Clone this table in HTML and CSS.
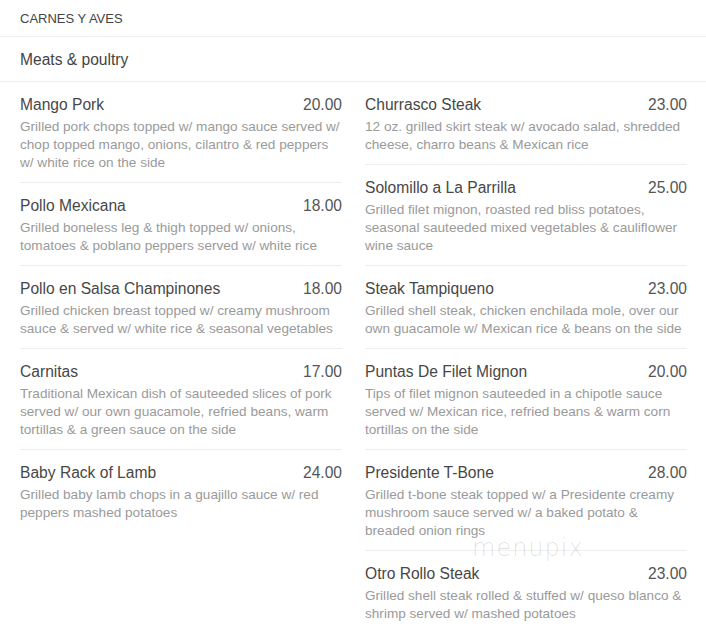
FILE: index.html
```html
<!DOCTYPE html>
<html>
<head>
<meta charset="utf-8">
<link rel="stylesheet" href="styles.css">
</head>
<body>
<div class="page">
  <div class="section-title">CARNES Y AVES</div>
  <div class="section-sub">Meats &amp; poultry</div>
  <div class="columns">
    <div class="col">
      <div class="item">
        <div class="head"><span class="name">Mango Pork</span><span class="price">20.00</span></div>
        <div class="desc">Grilled pork chops topped w/ mango sauce served w/ chop topped mango, onions, cilantro &amp; red peppers w/ white rice on the side</div>
      </div>
      <div class="item">
        <div class="head"><span class="name">Pollo Mexicana</span><span class="price">18.00</span></div>
        <div class="desc">Grilled boneless leg &amp; thigh topped w/ onions, tomatoes &amp; poblano peppers served w/ white rice</div>
      </div>
      <div class="item">
        <div class="head"><span class="name">Pollo en Salsa Champinones</span><span class="price">18.00</span></div>
        <div class="desc">Grilled chicken breast topped w/ creamy mushroom sauce &amp; served w/ white rice &amp; seasonal vegetables</div>
      </div>
      <div class="item">
        <div class="head"><span class="name">Carnitas</span><span class="price">17.00</span></div>
        <div class="desc">Traditional Mexican dish of sauteeded slices of pork served w/ our own guacamole, refried beans, warm tortillas &amp; a green sauce on the side</div>
      </div>
      <div class="item">
        <div class="head"><span class="name">Baby Rack of Lamb</span><span class="price">24.00</span></div>
        <div class="desc">Grilled baby lamb chops in a guajillo sauce w/ red peppers mashed potatoes</div>
      </div>
    </div>
    <div class="col">
      <div class="item">
        <div class="head"><span class="name">Churrasco Steak</span><span class="price">23.00</span></div>
        <div class="desc">12 oz. grilled skirt steak w/ avocado salad, shredded cheese, charro beans &amp; Mexican rice</div>
      </div>
      <div class="item">
        <div class="head"><span class="name">Solomillo a La Parrilla</span><span class="price">25.00</span></div>
        <div class="desc">Grilled filet mignon, roasted red bliss potatoes, seasonal sauteeded mixed vegetables &amp; cauliflower wine sauce</div>
      </div>
      <div class="item">
        <div class="head"><span class="name">Steak Tampiqueno</span><span class="price">23.00</span></div>
        <div class="desc">Grilled shell steak, chicken enchilada mole, over our own guacamole w/ Mexican rice &amp; beans on the side</div>
      </div>
      <div class="item">
        <div class="head"><span class="name">Puntas De Filet Mignon</span><span class="price">20.00</span></div>
        <div class="desc">Tips of filet mignon sauteeded in a chipotle sauce served w/ Mexican rice, refried beans &amp; warm corn tortillas on the side</div>
      </div>
      <div class="item">
        <div class="head"><span class="name">Presidente T-Bone</span><span class="price">28.00</span></div>
        <div class="desc">Grilled t-bone steak topped w/ a Presidente creamy mushroom sauce served w/ a baked potato &amp; breaded onion rings</div>
      </div>
      <div class="item">
        <div class="head"><span class="name">Otro Rollo Steak</span><span class="price">23.00</span></div>
        <div class="desc">Grilled shell steak rolled &amp; stuffed w/ queso blanco &amp; shrimp served w/ mashed potatoes</div>
      </div>
    </div>
  </div>
  <div class="watermark">menupix</div>
</div>
</body>
</html>
```

FILE: styles.css
```css
html, body {
  margin: 0;
  padding: 0;
  background: #fff;
}
body {
  font-family: "Liberation Sans", Arial, sans-serif;
  color: #444;
}
.page {
  position: relative;
  width: 706px;
}
.section-title {
  font-size: 13px;
  line-height: 18px;
  padding: 10px 20px 8px;
  color: #444;
  border-bottom: 1px solid #eee;
}
.section-sub {
  font-size: 15.6px;
  line-height: 20px;
  padding: 13px 20px 11px;
  color: #444;
  border-bottom: 1px solid #eee;
}
.columns {
  display: grid;
  grid-template-columns: 322px 322px;
  column-gap: 23px;
  padding: 0 19px 0 20px;
}
.item {
  padding: 13px 0 10px;
  border-bottom: 1px solid #eee;
}
.item:last-child {
  border-bottom: none;
}
.head {
  display: flex;
  justify-content: space-between;
  font-size: 15.6px;
  line-height: 20px;
  color: #474747;
}
.price {
  color: #555;
}
.desc {
  margin-top: 3px;
  font-size: 13.6px;
  line-height: 18px;
  color: #9a9a9a;
}
.watermark {
  position: absolute;
  left: 472px;
  top: 540px;
  font-family: "DejaVu Sans", sans-serif;
  font-weight: 200;
  font-size: 24px;
  line-height: 16px;
  letter-spacing: 1px;
  color: rgba(0, 0, 0, 0.12);
}
```
